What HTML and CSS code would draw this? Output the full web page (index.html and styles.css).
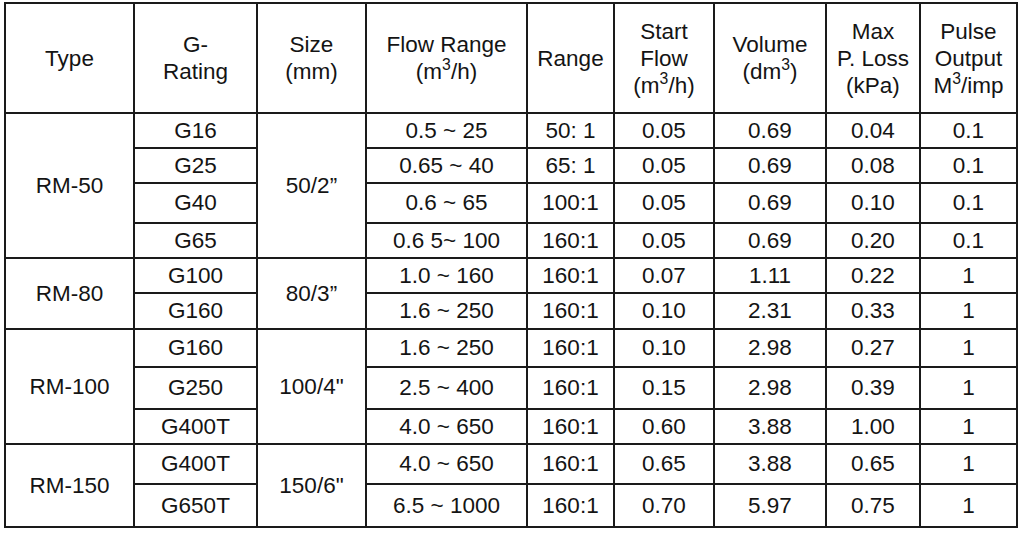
FILE: index.html
```html
<!DOCTYPE html>
<html lang="en">
<head>
<meta charset="utf-8">
<title>RM Series Specifications</title>
<link rel="stylesheet" href="styles.css">
</head>
<body>
<table class="spec">
  <colgroup>
    <col class="c-type">
    <col class="c-grating">
    <col class="c-size">
    <col class="c-flow">
    <col class="c-range">
    <col class="c-start">
    <col class="c-vol">
    <col class="c-loss">
    <col class="c-pulse">
  </colgroup>
  <thead>
    <tr>
      <th>Type</th>
      <th>G-<br>Rating</th>
      <th>Size<br>(mm)</th>
      <th>Flow Range<br>(m<sup>3</sup>/h)</th>
      <th>Range</th>
      <th>Start<br>Flow<br>(m<sup>3</sup>/h)</th>
      <th>Volume<br>(dm<sup>3</sup>)</th>
      <th>Max<br>P. Loss<br>(kPa)</th>
      <th>Pulse<br>Output<br>M<sup>3</sup>/imp</th>
    </tr>
  </thead>
  <tbody>
    <tr>
      <td rowspan="4">RM-50</td>
      <td>G16</td>
      <td rowspan="4">50/2”</td>
      <td>0.5 ~ 25</td>
      <td>50: 1</td>
      <td>0.05</td>
      <td>0.69</td>
      <td>0.04</td>
      <td>0.1</td>
    </tr>
    <tr>
      <td>G25</td>
      <td>0.65 ~ 40</td>
      <td>65: 1</td>
      <td>0.05</td>
      <td>0.69</td>
      <td>0.08</td>
      <td>0.1</td>
    </tr>
    <tr>
      <td>G40</td>
      <td>0.6 ~ 65</td>
      <td>100:1</td>
      <td>0.05</td>
      <td>0.69</td>
      <td>0.10</td>
      <td>0.1</td>
    </tr>
    <tr>
      <td>G65</td>
      <td>0.6 5~ 100</td>
      <td>160:1</td>
      <td>0.05</td>
      <td>0.69</td>
      <td>0.20</td>
      <td>0.1</td>
    </tr>
    <tr>
      <td rowspan="2">RM-80</td>
      <td>G100</td>
      <td rowspan="2">80/3”</td>
      <td>1.0 ~ 160</td>
      <td>160:1</td>
      <td>0.07</td>
      <td>1.11</td>
      <td>0.22</td>
      <td>1</td>
    </tr>
    <tr>
      <td>G160</td>
      <td>1.6 ~ 250</td>
      <td>160:1</td>
      <td>0.10</td>
      <td>2.31</td>
      <td>0.33</td>
      <td>1</td>
    </tr>
    <tr>
      <td rowspan="3">RM-100</td>
      <td>G160</td>
      <td rowspan="3">100/4"</td>
      <td>1.6 ~ 250</td>
      <td>160:1</td>
      <td>0.10</td>
      <td>2.98</td>
      <td>0.27</td>
      <td>1</td>
    </tr>
    <tr>
      <td>G250</td>
      <td>2.5 ~ 400</td>
      <td>160:1</td>
      <td>0.15</td>
      <td>2.98</td>
      <td>0.39</td>
      <td>1</td>
    </tr>
    <tr>
      <td>G400T</td>
      <td>4.0 ~ 650</td>
      <td>160:1</td>
      <td>0.60</td>
      <td>3.88</td>
      <td>1.00</td>
      <td>1</td>
    </tr>
    <tr>
      <td rowspan="2">RM-150</td>
      <td>G400T</td>
      <td rowspan="2">150/6"</td>
      <td>4.0 ~ 650</td>
      <td>160:1</td>
      <td>0.65</td>
      <td>3.88</td>
      <td>0.65</td>
      <td>1</td>
    </tr>
    <tr>
      <td>G650T</td>
      <td>6.5 ~ 1000</td>
      <td>160:1</td>
      <td>0.70</td>
      <td>5.97</td>
      <td>0.75</td>
      <td>1</td>
    </tr>
  </tbody>
</table>
</body>
</html>
```

FILE: styles.css
```css
html, body {
  margin: 0;
  padding: 0;
  background: #ffffff;
}

body {
  padding: 2px 0 0 4px;
  font-family: "Liberation Sans", Arial, sans-serif;
  color: #141414;
}

.spec {
  border-collapse: collapse;
  table-layout: fixed;
  width: 1012px;
  font-size: 22.5px;
}

.c-type { width: 129px; }
.c-grating { width: 123px; }
.c-size { width: 109px; }
.c-flow { width: 161px; }
.c-range { width: 87px; }
.c-start { width: 100px; }
.c-vol { width: 112px; }
.c-loss { width: 94px; }
.c-pulse { width: 97px; }

.spec th,
.spec td {
  border: 2px solid #1a1a1a;
  padding: 0;
  text-align: center;
  vertical-align: middle;
  font-weight: normal;
}

.spec th {
  line-height: 27px;
}

.spec td {
  line-height: 24px;
}

.spec sup {
  font-size: 0.7em;
  line-height: 0;
  vertical-align: 0.6em;
}

.spec thead tr { height: 110px; }
.spec tbody tr:nth-child(1) { height: 35px; }
.spec tbody tr:nth-child(2) { height: 35px; }
.spec tbody tr:nth-child(3) { height: 40px; }
.spec tbody tr:nth-child(4) { height: 35px; }
.spec tbody tr:nth-child(5) { height: 35px; }
.spec tbody tr:nth-child(6) { height: 36px; }
.spec tbody tr:nth-child(7) { height: 38px; }
.spec tbody tr:nth-child(8) { height: 42px; }
.spec tbody tr:nth-child(9) { height: 35px; }
.spec tbody tr:nth-child(10) { height: 40px; }
.spec tbody tr:nth-child(11) { height: 43px; }
```
